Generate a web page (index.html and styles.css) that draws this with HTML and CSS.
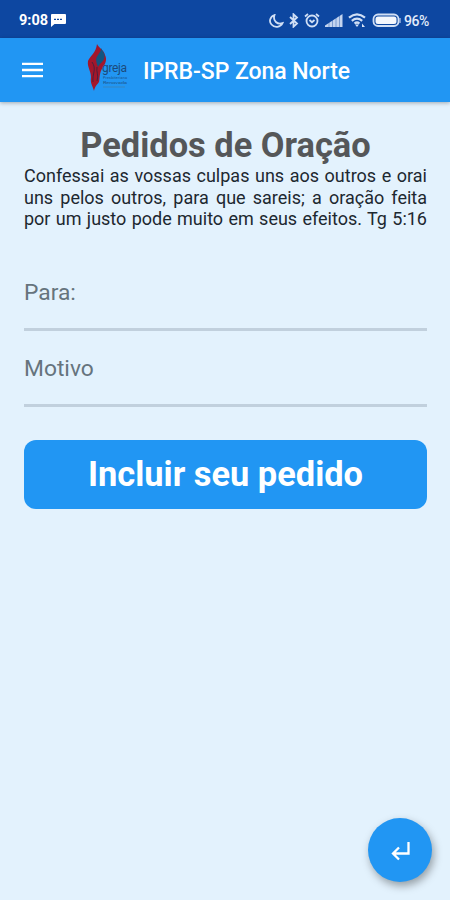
FILE: index.html
```html
<!DOCTYPE html>
<html lang="pt-BR">
<head>
  <meta charset="UTF-8">
  <meta name="viewport" content="width=device-width, initial-scale=1">
  <title>IPRB-SP Zona Norte</title>
  <link rel="stylesheet" href="styles.css">
</head>
<body>
  <div class="status">
    <span class="hora">9:08</span>
    <svg class="msg" width="15" height="13" viewBox="0 0 15 13"><path fill="#fff" d="M1 0h13q1 0 1 1v8q0 1-1 1H3.500L0 13V1q0-1 1-1z"/><path stroke="#0d47a1" stroke-width="1.200" stroke-dasharray="2 1" d="M3 5.400h9"/></svg>
    <div class="icones">
      <svg width="15" height="14" viewBox="0 0 15 14"><path class="linha" d="M5.500 1C1 2.500-.3 7.500 2.500 10.500c3 3.500 9 3 11-1.300C8.500 11 3.500 7 5.500 1z"/></svg>
      <svg width="10" height="15" viewBox="0 0 10 15"><path class="linha" d="M1 4l7 6.500-3.500 3.200V1.300L8 4.500 1 11"/></svg>
      <svg width="16" height="15" viewBox="0 0 16 15"><circle class="linha" cx="8" cy="8" r="5.500"/><path class="linha" d="M1 3.500L4 1M15 3.500L12 1M5.500 7L8 9.200 10.500 7"/></svg>
      <svg width="18" height="13" viewBox="0 0 18 13"><path fill="#c3d4ef" d="M0 13V11.500L17.500 0v13z"/><path stroke="#0d47a1" stroke-width=".4" d="M4 6v7M7.500 4v9M11 2v11M14.500 0v13"/></svg>
      <svg width="19" height="15" viewBox="0 0 19 15"><path class="linha grossa" d="M1 4.700q8-6.500 16 0M3.800 7.800q5.200-4.200 10.400 0M6.500 10.500q2.500-2 5 0"/><path fill="#dbe7f8" d="M7 11.500h4L9 14zM14 10.500l3 3.500h-3z"/></svg>
      <svg width="29" height="15" viewBox="0 0 29 15"><rect class="linha" x="1.500" y="1.500" width="25" height="11.500" rx="4.500"/><rect x="3.500" y="3.500" width="21" height="7.500" rx="2.500" fill="#f4f7fc"/><path stroke="#b9cdec" stroke-width="1.200" d="M28 5v5"/></svg>
    </div>
    <span class="bateria">96%</span>
  </div>

  <header class="barra">
    <svg class="menu" width="21" height="16" viewBox="0 0 21 16"><path stroke="#fff" stroke-width="2.300" d="M0 1.800h21M0 8h21M0 14.200h21"/></svg>
    <svg class="logo" width="44" height="52" viewBox="0 0 44 52">
      <path fill="#a3162b" d="M10 1c2 4 7 6 8 11 2 4 1 8-2 12-4 6-3 11-4 15-2 3-4 4-5 9-1-5-4-7-3-14C4 28 0 24 1 18c2-5 8-8 9-17z"/>
      <path fill="#12547f" d="M14 5c2 4 5 6 3 11-1 3-4 4-6 8-2-6-3-8 0-12 2-3 3-4 3-7z"/>
      <path fill="none" stroke="#49213e" d="M5 19c5 7 0 12 1 20M10 24c-1 5 2 8 0 14"/>
      <text class="logo-nome" x="15" y="29" textLength="25">greja</text>
      <text class="logo-sub" x="16" y="36" textLength="24">Presbiteriana</text>
      <text class="logo-sub" x="16" y="40.500" textLength="24" lengthAdjust="spacingAndGlyphs">Renovada</text>
      <path stroke="#477ca0" stroke-width=".6" d="M16 44h22"/>
    </svg>
    <span class="titulo">IPRB-SP Zona Norte</span>
  </header>

  <main>
    <h1>Pedidos de Oração</h1>
    <p class="versiculo">Confessai as vossas culpas uns aos outros e orai uns pelos outros, para que sareis; a oração feita por um justo pode muito em seus efeitos. Tg 5:16</p>
    <input class="campo" type="text" placeholder="Para:">
    <input class="campo" type="text" placeholder="Motivo">
    <button class="incluir">Incluir seu pedido</button>
  </main>

  <button class="voltar" aria-label="Voltar">
    <svg width="20" height="20" viewBox="0 0 20 20"><path fill="none" stroke="#fff" stroke-width="2.300" d="M17.500 1v11.500H2.500M8 6.500l-6 6 6 6"/></svg>
  </button>
</body>
</html>
```
FILE: styles.css
```css
* {
  box-sizing: border-box;
}
body {
  margin: 0;
  height: 900px;
  overflow: hidden;
  background: #e3f2fd;
  font-family: Roboto, sans-serif;
}
svg {
  display: block;
  flex: none;
}
.status {
  display: flex;
  align-items: center;
  height: 38px;
  padding: 3px 20px 0 19px;
  background: #0d47a1;
  color: #fff;
}
.hora {
  width: 29px;
  font-size: 14.500px;
  font-weight: 700;
  white-space: nowrap;
}
.msg {
  margin-left: 3px;
}
.icones {
  display: flex;
  align-items: center;
  gap: 5px;
  margin-left: auto;
}
.linha {
  fill: none;
  stroke: #d0dff5;
  stroke-width: 1.800;
}
.grossa {
  stroke-width: 2.200;
}
.bateria {
  width: 26px;
  margin-left: 3px;
  color: #e3ecfa;
  font-size: 14px;
  font-weight: 500;
  letter-spacing: -0.500px;
}
.barra {
  display: flex;
  align-items: center;
  height: 64px;
  padding-left: 22px;
  background: #2196f3;
  box-shadow: 0 1px 4px rgba(0, 0, 0, 0.300);
  color: #fff;
}
.logo {
  margin: -2px 0 0 44px;
}
.logo-nome {
  fill: #1c4b7b;
  font-size: 12px;
}
.logo-sub {
  fill: #1c558c;
  font-size: 3.800px;
}
.titulo {
  margin: 2px 0 0 12px;
  font-size: 23px;
  font-weight: 500;
  letter-spacing: -0.050px;
  white-space: nowrap;
}
main {
  padding: 23px 23px 0 24px;
}
h1 {
  margin: 0;
  color: #555759;
  font-size: 34.400px;
  font-weight: 700;
  line-height: 40px;
  text-align: center;
  white-space: nowrap;
}
.versiculo {
  margin: 0 0 28px;
  color: #1d2830;
  font-size: 18px;
  line-height: 21.700px;
  text-align: justify;
  text-align-last: justify;
}
.campo {
  display: block;
  width: 100%;
  height: 73px;
  margin-bottom: 3px;
  padding: 0 0 2px;
  border: 0;
  border-bottom: 3px solid #c1d0dd;
  outline: 0;
  background: none;
  font: 22.800px Roboto, sans-serif;
}
.campo::placeholder {
  color: #66747d;
  opacity: 1;
}
.incluir {
  display: block;
  width: 100%;
  height: 69px;
  margin-top: 33px;
  padding: 0 0 2px;
  border: 0;
  border-radius: 12px;
  background: #2196f3;
  color: #fff;
  font: 700 34.400px Roboto, sans-serif;
}
.voltar {
  position: absolute;
  right: 18px;
  bottom: 18px;
  display: flex;
  align-items: center;
  justify-content: center;
  width: 64px;
  height: 64px;
  padding: 2px 0 0 2px;
  border: 0;
  border-radius: 50%;
  background: #2196f3;
  box-shadow: 2px 4px 8px rgba(0, 0, 0, 0.350);
}
```
